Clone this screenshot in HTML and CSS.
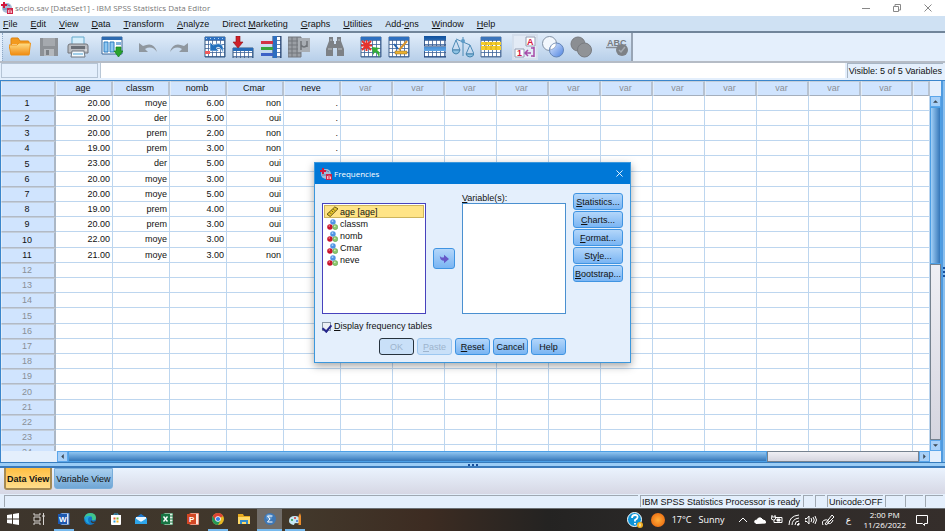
FILE: index.html
```
<!DOCTYPE html>
<html lang="en">
<head>
    <meta charset="UTF-8">
    <meta name="viewport" content="width=device-width, initial-scale=1.0">
    <title>socio.sav [DataSet1] - IBM SPSS Statistics Data Editor</title>
    <link rel="stylesheet" href="styles.css">
</head>
<body>
    <svg class="defs" aria-hidden="true">
        <defs>
            <linearGradient id="gFolder" x1="0" y1="0" x2="0" y2="1"><stop offset="0" stop-color="#ffe08a"/><stop offset="1" stop-color="#f08a10"/></linearGradient>
            <linearGradient id="gBlue" x1="0" y1="0" x2="0" y2="1"><stop offset="0" stop-color="#0f4f9c"/><stop offset="1" stop-color="#5ea6e8"/></linearGradient>
            <linearGradient id="gSet" x1="0" y1="0" x2="1" y2="1"><stop offset="0" stop-color="#dce9ff"/><stop offset="1" stop-color="#4d82e0"/></linearGradient>
            <radialGradient id="gSun"><stop offset="0" stop-color="#ffae3a"/><stop offset="1" stop-color="#ee7416"/></radialGradient>
            <pattern id="pGrid" width="4" height="4" patternUnits="userSpaceOnUse"><rect width="4" height="4" fill="#fff"/><path d="M0 .5H4M.5 0V4" stroke="#3c6298" stroke-width=".8"/></pattern>
        </defs>
        <symbol id="logo" viewBox="0 0 12 12">
            <circle cx="6" cy="6" r="5" fill="#a9bdd6"/><path d="M3 4q3-3 6 0M2 7h8" stroke="#5a80ac" fill="none"/>
            <path d="M3 0v6M0 3h6" stroke="#d3183c" stroke-width="2"/><rect x="6" y="6" width="6" height="6" fill="#cf2448"/><path d="M7.500 8v3M9 7.500v3.500M10.500 8.500v2.500" stroke="#fff" stroke-width=".7"/>
        </symbol>
        <symbol id="nominal" viewBox="0 0 12 12">
            <circle cx="6.500" cy="3.200" r="3" fill="#4f94e4"/><circle cx="3.200" cy="8.600" r="3" fill="#c9142c"/><circle cx="9" cy="8.800" r="2.800" fill="#8cc96e" stroke="#4f9440" stroke-width=".5"/>
            <circle cx="6" cy="2.300" r="1" fill="#b5d5fa"/><circle cx="2.500" cy="7.600" r=".9" fill="#f08c96"/><circle cx="8.500" cy="8" r=".9" fill="#d8f2c8"/>
        </symbol>
    </svg>

    <header class="titlebar">
        <svg class="logo"><use href="#logo"/></svg>
        <span>socio.sav [DataSet1] - IBM SPSS Statistics Data Editor</span>
        <div class="window-buttons">
            <button aria-label="Minimize"><svg viewBox="0 0 8 8"><path d="M0 4.500h8"/></svg></button>
            <button aria-label="Restore"><svg viewBox="0 0 8 8"><path d="M.5 2.500h5v5h-5zM2 2V.5h5.500V6H6"/></svg></button>
            <button aria-label="Close"><svg viewBox="0 0 8 8"><path d="M.5.5l7 7M7.500.5l-7 7"/></svg></button>
        </div>
    </header>

    <nav class="menu">
        <a href="#"><u>F</u>ile</a>
        <a href="#"><u>E</u>dit</a>
        <a href="#"><u>V</u>iew</a>
        <a href="#"><u>D</u>ata</a>
        <a href="#"><u>T</u>ransform</a>
        <a href="#"><u>A</u>nalyze</a>
        <a href="#">Direct <u>M</u>arketing</a>
        <a href="#"><u>G</u>raphs</a>
        <a href="#"><u>U</u>tilities</a>
        <a href="#">Add-<u>o</u>ns</a>
        <a href="#"><u>W</u>indow</a>
        <a href="#"><u>H</u>elp</a>
    </nav>

    <div class="toolbar-row">
        <div class="toolbar">
            <div class="tools files">
                <button aria-label="Open"><svg viewBox="0 0 22 22"><path d="M2 18V3q0-1 1-1h6l2 3h8q1 0 1 1v12z" fill="#f39a1e" stroke="#dc8210"/><path d="M3 8h15v9H3z" fill="#fff6dc"/><path d="M0 9h8l2-2h11.500L20 19H2z" fill="url(#gFolder)" stroke="#ee9218"/></svg></button>
                <button aria-label="Save"><svg viewBox="0 0 22 22"><path d="M2 2h18v18H2z" fill="#8d9196"/><path d="M5 2h12v8H5z" fill="#a5a9ae"/><path d="M6 13h10v7H6z" fill="#b4b8bd"/><path d="M8 14h3v5H8z" fill="#7c8085"/></svg></button>
                <button aria-label="Print"><svg viewBox="0 0 22 22"><path d="M5 1h12v9H5z" fill="#d5eefb" stroke="#65a9cb"/><path d="M1 10q0-2 2-2h16q2 0 2 2v7H1z" fill="#b9bcc1" stroke="#72757a"/><path d="M4 10h14v3H4z" fill="#6a6f76"/><path d="M5 15h12l1 6H4z" fill="#f4faff" stroke="#717982"/><path d="M6 18h10" stroke="#4aa1d2"/><path d="M18 14h2" stroke="#f4f4f4"/></svg></button>
            </div>
            <div class="tools">
                <button aria-label="Recall dialog"><svg viewBox="0 0 22 22"><path d="M1 1h20v17H1z" fill="#fff" stroke="#3c6697"/><path d="M1 1h20v3H1z" fill="#2e6bb0"/><path d="M3 6h4v10H3zM9 6h4v10H9z" fill="#8fc8f2" stroke="#2e7cc0"/><path d="M15 6h5v3h-5z" fill="#7fb0dc"/><path d="M15 11h5v4h2l-4.500 6L13 15h2z" fill="#2aa32c" stroke="#13801c" stroke-width=".7"/></svg></button>
            </div>
            <div class="tools arrows wide">
                <button aria-label="Undo"><svg viewBox="0 0 22 22"><path d="M2 7v9h9l-3-3q7-4 12 3Q17 5 6 10z" fill="#8f979f"/></svg></button>
                <button aria-label="Redo"><svg viewBox="0 0 22 22"><path d="M20 7v9h-9l3-3q-7-4-12 3Q5 5 16 10z" fill="#8f979f"/></svg></button>
            </div>
            <div class="tools wide">
                <button aria-label="Go to case"><svg viewBox="0 0 22 22"><path d="M1 1h20v20H1z" fill="url(#pGrid)" stroke="#315780"/><path d="M1 1h20v3H1z" fill="#2e70c0"/><path d="M2 2.500h19" stroke="#b5d7f5" stroke-dasharray="1 3"/><path d="M6 6v9h9l-3-3q4-3 7 5Q21 4 9 9z" fill="#2370bd" stroke="#fff" stroke-width=".5"/><path d="M1 15h5v3H1z" fill="#ee5b5b"/></svg></button>
                <button aria-label="Go to variable"><svg viewBox="0 0 22 22"><path d="M1 12h20v10H1z" fill="url(#pGrid)" stroke="#315780"/><path d="M1 12h20v3H1z" fill="#286cb8"/><path d="M4 0h4v6h3l-5 6-5-6h3z" fill="#cf2029" stroke="#8d1015" stroke-width=".6"/></svg></button>
                <button aria-label="Variables"><svg viewBox="0 0 22 22"><path d="M13 0h8v22h-8z" fill="url(#pGrid)" stroke="#243f69"/><path d="M13 0h4v22h-4z" fill="#2d6fc0"/><path d="M1 6.500h12" stroke="#d23345" stroke-width="3"/><path d="M1 12.500h12" stroke="#39a63c" stroke-width="3"/><path d="M1 18.500h12" stroke="#3d62c6" stroke-width="3"/></svg></button>
                <button aria-label="Descriptives"><svg viewBox="0 0 22 22"><path d="M0 1h13v20H0z" fill="#9a9ea4" stroke="#747980"/><path d="M0 5h13M0 9h13M0 13h13M0 17h13M4 1v20M9 1v20" stroke="#73777d"/><path d="M10 2h12v14H10z" fill="#a8adb3"/><path d="M13 14V5v4q3 4 6 0V5v6" fill="none" stroke="#6f7378" stroke-width="1.500"/></svg></button>
            </div>
            <div class="tools wide">
                <button aria-label="Find"><svg viewBox="0 0 22 22"><path d="M5 1h4v4h1v3h2V5h1V1h4v4l3 8v7h-7v-8h-4v8H2v-7l3-8z" fill="#7d8186"/><path d="M4 13h4M14 13h4M6 4h2M14 4h2" stroke="#bcc0c4"/></svg></button>
            </div>
            <div class="tools wide">
                <button aria-label="Insert cases"><svg viewBox="0 0 22 22"><path d="M1 1h20v20H1z" fill="url(#pGrid)" stroke="#44658e"/><path d="M1 1h20v3H1z" fill="#2e70c0"/><path d="M2 5l9 9M11 5l-9 9M6.500 4v11M1 9.500h11" stroke="#e8322b" stroke-width="2"/><path d="M19 22q2-6-2-8l3-2-8-1 1 8 2-3q3 1 4 6z" fill="#34ad35"/></svg></button>
                <button aria-label="Insert variable"><svg viewBox="0 0 22 22"><path d="M1 1h20v20H1z" fill="url(#pGrid)" stroke="#44658e"/><path d="M1 1h20v3H1z" fill="#2e70c0"/><path d="M6 8l4 5" fill="none" stroke="#2464ae" stroke-width="2"/><path d="M19 5l-8 9" stroke="#d8932b" stroke-width="2"/><path d="M7 15h12v3H7z" fill="#ecb12f" stroke="#8b6526" stroke-width=".5"/></svg></button>
            </div>
            <div class="tools wide">
                <button aria-label="Split file"><svg viewBox="0 0 22 22"><path d="M0 1h22v9H0zM0 12h22v9H0z" fill="url(#pGrid)" stroke="#1c437a"/><path d="M0 0h22v4H0zM0 11h22v4H0z" fill="url(#gBlue)"/></svg></button>
                <button aria-label="Weight cases"><svg viewBox="0 0 22 22"><g fill="none" stroke="#4f8cb7"><path d="M4 3l14 6M11 1v19M4 4L0 14h8L4 4M18 9l-4 9h8l-4-9"/></g><path d="M0 14h8q-1 4-4 4t-4-4M14 18h8q-1 3-4 3t-4-3" fill="#8ec3e4" stroke="#4482ac"/><circle cx="11" cy="5" r="2" fill="#5e9cc8"/></svg></button>
                <button aria-label="Select cases"><svg viewBox="0 0 22 22"><path d="M1 1h20v20H1z" fill="url(#pGrid)" stroke="#58769c"/><path d="M1 1h20v3H1z" fill="#3b75bb"/><path d="M1 6h20v3H1zM1 10h20v4H1z" fill="#f5ce2b"/><path d="M6 6v8M11 6v8M16 6v8" stroke="#d5a51c"/></svg></button>
            </div>
            <div class="tools">
                <button class="pressed" aria-label="Value labels"><svg viewBox="0 0 22 22"><path d="M12 1h9v9h-9z" fill="#fff" stroke="#929cb2"/><text x="13" y="9" class="glyph">A</text><path d="M1 13h9v8H1z" fill="#fff" stroke="#929cb2"/><text x="3" y="20" class="glyph">1</text><path d="M20 11v10M20 12h-3M20 20h-3M17 17h-5M14 14l-3 3 3 3" fill="none" stroke="#a64ba8" stroke-width="1.500"/></svg></button>
                <button aria-label="Use variable sets"><svg viewBox="0 0 22 22"><circle cx="7.500" cy="7.500" r="7" fill="#f2f7fd" stroke="#8291a4"/><circle cx="14.500" cy="14" r="7" fill="url(#gSet)" stroke="#6385b8"/><path d="M8 14q0-6 6-7 1 5-6 7" fill="#fff" stroke="#8195b4" stroke-width=".6"/></svg></button>
                <button aria-label="Show all variables"><svg viewBox="0 0 22 22"><circle cx="8" cy="8" r="7" fill="#8b8e92" stroke="#787b80"/><circle cx="14.500" cy="14" r="7" fill="#909397" stroke="#787b80"/></svg></button>
            </div>
            <div class="tools wide">
                <button aria-label="Spell check"><svg viewBox="0 0 22 22"><text x="1" y="10" class="abc">ABC</text><path d="M0 11.500h12" stroke="#888d94" stroke-width="1.500"/><circle cx="16" cy="14" r="6" fill="#7d8186"/><path d="M13 14l2 2 4-5" fill="none" stroke="#a6abb2" stroke-width="1.500"/></svg></button>
            </div>
        </div>
    </div>

    <div class="editbar">
        <output class="cell-name"></output>
        <input class="cell-value" type="text" aria-label="Cell value">
        <span class="visible">Visible: 5 of 5 Variables</span>
    </div>

    <main class="editor">
        <div class="sheet">
            <table>
                <colgroup id="cols"></colgroup>
                <thead><tr id="headings"></tr></thead>
                <tbody id="rows"></tbody>
            </table>
        </div>
        <div class="vscroll">
            <span class="corner"></span>
            <button aria-label="Scroll up"><svg viewBox="0 0 8 8"><path d="M0 6l4-4 4 4z"/></svg></button>
            <span class="thumb"></span>
            <span class="track"></span>
            <button aria-label="Scroll down"><svg viewBox="0 0 8 8"><path d="M0 2l4 4 4-4z"/></svg></button>
        </div>
        <div class="hscroll">
            <span class="corner"></span>
            <button aria-label="Scroll left"><svg viewBox="0 0 8 8"><path d="M6 0L2 4l4 4z"/></svg></button>
            <span class="thumb"></span>
            <span class="track"></span>
            <button aria-label="Scroll right"><svg viewBox="0 0 8 8"><path d="M2 0l4 4-4 4z"/></svg></button>
        </div>
        <div class="side-split"><i></i><i></i><i></i></div>
    </main>
    <div class="splitter"><i></i><i></i><i></i></div>

    <div class="views">
        <button class="view active">Data View</button>
        <button class="view">Variable View</button>
    </div>

    <footer class="status">
        <span class="message"></span>
        <span class="processor">IBM SPSS Statistics Processor is ready</span>
        <span class="small"></span>
        <span class="small"></span>
        <span class="unicode">Unicode:OFF</span>
        <span class="medium"></span>
        <span class="medium"></span>
        <span class="medium"></span>
    </footer>

    <div class="taskbar">
        <div class="apps">
            <button aria-label="Start"><svg viewBox="0 0 12 12"><path d="M0 2l5-.7v4.300H0zM6 1.100L12 0v5.600H6zM0 6.400h5v4.400L0 10zM6 6.400h6V12l-6-.9z" fill="#fff"/></svg></button>
            <button aria-label="Task view"><svg viewBox="0 0 12 12"><path d="M1 0v2h6V0M1 12v-2h6v2M1 4h6v4H1zM10.500 0v12M9 3h3" fill="none" stroke="#d8d5d2"/></svg></button>
            <button class="open" aria-label="Word"><svg viewBox="0 0 12 12"><path d="M3 0h8v12H3z" fill="#d7e5f8" stroke="#2c62b5"/><path d="M0 1h9v10H0z" fill="#1d58b0"/><text x="1" y="9">W</text></svg></button>
            <button aria-label="Edge"><svg viewBox="0 0 12 12"><circle cx="6" cy="6" r="6" fill="#1478c6"/><path d="M0 6Q1 0 6 0q6 0 6 5 0 3-4 2 1-4-3-4-3 0-5 3" fill="#41c68c"/><path d="M1 5q3-4 7-1-4-1-4 3 0 2 2 4-5-1-5-6" fill="#20a7df"/><path d="M7 7q1 3 5 1-1 3-4 2-2-1-1-3" fill="#3c352d"/></svg></button>
            <button aria-label="Store"><svg viewBox="0 0 12 12"><path d="M4 3V1h4v2" fill="none" stroke="#3aa8e0"/><path d="M1 2h10v9q0 1-1 1H2q-1 0-1-1z" fill="#fff"/><path d="M3.500 4.500h2v2h-2z" fill="#ed5426"/><path d="M6.500 4.500h2v2h-2z" fill="#75b72a"/><path d="M3.500 7.500h2v2h-2z" fill="#2c9cdf"/><path d="M6.500 7.500h2v2h-2z" fill="#f5b71b"/></svg></button>
            <button aria-label="Mail"><svg viewBox="0 0 12 12"><path d="M0 5l6-4 6 4v6H0z" fill="#1c78cf"/><path d="M1 4h10v3L6 9 1 7z" fill="#eaf7ff"/><path d="M0 5l6 4 6-4v6H0z" fill="#2ea5ea"/></svg></button>
            <button aria-label="Excel"><svg viewBox="0 0 12 12"><path d="M3 0h9v12H3z" fill="#e0f1e5" stroke="#237747"/><path d="M9 3h3M9 6h3M9 9h3" stroke="#237747"/><path d="M0 1h9v10H0z" fill="#177443"/><path d="M2.500 3.500l4 5M6.500 3.500l-4 5" stroke="#fff" stroke-width="1.400"/></svg></button>
            <button aria-label="PowerPoint"><svg viewBox="0 0 12 12"><path d="M3 0h9v12H3z" fill="#ffe8df" stroke="#cf4726"/><path d="M0 1h9v10H0z" fill="#d34724"/><text x="2" y="9">P</text></svg></button>
            <button class="open" aria-label="Chrome"><svg viewBox="0 0 12 12"><circle cx="6" cy="6" r="6" fill="#e7b824"/><path d="M.8 3A6 6 0 0 1 11.200 3L6 6z" fill="#db4435"/><path d="M.8 3A6 6 0 0 0 6 12l2.500-4.500H6z" fill="#249858"/><path d="M.8 3l2.500 4.500L6 6V3h5" fill="#db4435"/><circle cx="6" cy="6" r="2.800" fill="#fff"/><circle cx="6" cy="6" r="2.100" fill="#397fe5"/></svg></button>
            <button aria-label="File Explorer"><svg viewBox="0 0 12 12"><path d="M0 1h5l1 2h6v8H0z" fill="#e6a91f"/><path d="M0 4h12v7H0z" fill="#ffda68"/><path d="M2 7h8v4H8V9H4v2H2z" fill="#348ccb"/></svg></button>
            <button class="current" aria-label="SPSS"><svg viewBox="0 0 12 12"><circle cx="6" cy="6" r="6" fill="#3e77b5"/><circle cx="5" cy="4" r="3" fill="#5d95cd"/><path d="M8.500 3h-5L6 6 3.500 9h5" fill="none" stroke="#fff"/></svg></button>
            <button class="open" aria-label="Paint"><svg viewBox="0 0 12 12"><path d="M0 8Q0 3 6 3q5 0 5 5 0 3-4 2-2 0-2 2-5-1-5-4" fill="#c5e8f5"/><circle cx="3" cy="7" r="1" fill="#2e9a4b"/><circle cx="6" cy="5" r="1" fill="#d83630"/><circle cx="8" cy="8" r="1" fill="#386fd3"/><path d="M9.500 12V3l1.500-3 1 3v9z" fill="#ec8d2b"/></svg></button>
        </div>
        <div class="tray">
            <button class="big" aria-label="Help"><svg viewBox="0 0 16 16"><circle cx="7.500" cy="7.500" r="7" fill="#0b93d8" stroke="#fff"/><path d="M5 6q0-3 3-3 3 0 2.500 2.500Q10 7 8 8v1.500M8 11v1.500" fill="none" stroke="#fff" stroke-width="1.800"/><circle cx="13" cy="13" r="3" fill="#f0ae20"/><path d="M13 11.500v3" stroke="#fff"/></svg></button>
            <button class="weather"><svg viewBox="0 0 14 14"><circle cx="7" cy="7" r="7" fill="url(#gSun)"/></svg><span>17°C</span><span>Sunny</span></button>
            <div class="tray-icons">
                <button aria-label="Show hidden icons"><svg viewBox="0 0 12 12"><path d="M2 8l4-4 4 4"/></svg></button>
                <button aria-label="OneDrive"><svg viewBox="0 0 12 12"><path d="M2 9.500q-2-1-1-3l2-.5q1-3 4-2l2 2q3 0 2.500 3z" fill="#fff"/></svg></button>
                <button aria-label="Battery"><svg viewBox="0 0 12 12"><path d="M4 3.500h7v5H3V6M1 1v2M4 1v2M0 3h5q0 3-2.500 3Q0 6 0 3"/><path d="M6 5h3v2H6z" fill="#fff"/></svg></button>
                <button aria-label="Network"><svg viewBox="0 0 12 12"><path d="M1 11Q1 2 11 1M4 11q0-6 7-7M7 11q0-4 4-4"/><path d="M9 11h2V9z" fill="#fff"/></svg></button>
                <button aria-label="Volume"><svg viewBox="0 0 12 12"><path d="M0 4.500h2L4 2v8L2 7.500H0zM6 4q1.500 2 0 4M8 3q2.500 3 0 6M10 2q3 4 0 8"/></svg></button>
                <button aria-label="Pen"><svg viewBox="0 0 12 12"><path d="M1 11Q-1 7 3 6t3 3q-1 3-3 1l7-9 2 2-6 6q3 2 5-3"/></svg></button>
            </div>
            <button class="lang">ع</button>
            <button class="clock"><time>2:00 PM</time><time>11/26/2022</time></button>
            <button class="notify" aria-label="Notifications"><svg viewBox="0 0 12 12"><path d="M.5 1.500h11v8h-3v2l-2-2h-6z"/></svg></button>
        </div>
    </div>

    <section class="dialog" role="dialog" aria-labelledby="dialogTitle">
        <header>
            <svg class="logo"><use href="#logo"/></svg>
            <h1 id="dialogTitle">Frequencies</h1>
            <button aria-label="Close dialog"><svg viewBox="0 0 8 8"><path d="M.5.5l7 7M7.500.5l-7 7"/></svg></button>
        </header>
        <div class="fields">
            <ul class="list source">
                <li class="selected"><svg viewBox="0 0 12 12"><path d="M0 9l8.500-8L12 3 3.500 11.500z" fill="#e5c42b" stroke="#5c4c11"/><path d="M3 7l1.500 1.500M5 5l1.500 1.500M7 3.500L8.500 5" stroke="#5c4c11"/></svg>age [age]</li>
                <li><svg><use href="#nominal"/></svg>classm</li>
                <li><svg><use href="#nominal"/></svg>nomb</li>
                <li><svg><use href="#nominal"/></svg>Cmar</li>
                <li><svg><use href="#nominal"/></svg>neve</li>
            </ul>
            <button class="move" aria-label="Move to variables"><svg viewBox="0 0 12 12"><path d="M1 2q1 3 5 2V1l6 5-6 5V8Q1 8 1 2" fill="#6658c8"/></svg></button>
            <div class="target">
                <span id="targetLabel"><u>V</u>ariable(s):</span>
                <ul class="list" aria-labelledby="targetLabel"></ul>
            </div>
            <div class="options">
                <button><u>S</u>tatistics...</button>
                <button><u>C</u>harts...</button>
                <button><u>F</u>ormat...</button>
                <button>Sty<u>l</u>e...</button>
                <button><u>B</u>ootstrap...</button>
            </div>
        </div>
        <label class="check" for="tables"><input type="checkbox" id="tables" checked><span><u>D</u>isplay frequency tables</span></label>
        <div class="actions">
            <button class="default" disabled>OK</button>
            <button disabled><u>P</u>aste</button>
            <button><u>R</u>eset</button>
            <button>Cancel</button>
            <button>Help</button>
        </div>
    </section>

    <script>
        const names = ['age', 'classm', 'nomb', 'Cmar', 'neve'];
        const data = [
            ['20.00', 'moye', '6.00', 'non', '.'],
            ['20.00', 'der', '5.00', 'oui', '.'],
            ['20.00', 'prem', '2.00', 'non', '.'],
            ['19.00', 'prem', '3.00', 'non', '.'],
            ['23.00', 'der', '5.00', 'oui', '.'],
            ['20.00', 'moye', '3.00', 'oui', '.'],
            ['20.00', 'moye', '5.00', 'oui', '.'],
            ['19.00', 'prem', '4.00', 'oui', '.'],
            ['20.00', 'prem', '3.00', 'oui', '.'],
            ['22.00', 'moye', '3.00', 'oui', '.'],
            ['21.00', 'moye', '3.00', 'non', '.']
        ];
        const emptyColumns = 12;
        const totalRows = 24;

        // Column widths and headings
        let cols = '<col class="number">';
        let headings = '<th></th>';
        for (let c = 0; c < names.length; c++) {
            cols += '<col class="used">';
            headings += '<th>' + names[c] + '</th>';
        }
        for (let c = 0; c < emptyColumns; c++) {
            const last = c === emptyColumns - 1;
            cols += last ? '<col>' : '<col class="unused">';
            headings += '<th class="empty">' + (last ? '' : 'var') + '</th>';
        }
        document.getElementById('cols').innerHTML = cols;
        document.getElementById('headings').innerHTML = headings;

        // Cases
        let rows = '';
        for (let r = 0; r < totalRows; r++) {
            const values = data[r] || [];
            rows += '<tr><th' + (data[r] ? '' : ' class="empty"') + '>' + (r + 1) + '</th>';
            for (let c = 0; c < names.length + emptyColumns; c++) {
                rows += '<td>' + (values[c] || '') + '</td>';
            }
            rows += '</tr>';
        }
        document.getElementById('rows').innerHTML = rows;
    </script>
</body>
</html>
```
FILE: styles.css
```
* {
    box-sizing: border-box;
}
body {
    margin: 0;
    height: 100vh;
    display: flex;
    flex-direction: column;
    overflow: hidden;
    position: relative;
    font-family: "Liberation Sans", Arial, sans-serif;
    font-size: 9px;
    line-height: 12px;
    color: #111;
    background: #e4effc;
}
button {
    font: inherit;
    color: inherit;
    padding: 0;
    border: none;
    background: none;
    white-space: nowrap;
}
svg {
    display: block;
    flex: none;
}
.defs {
    position: absolute;
    width: 0;
    height: 0;
}
.logo {
    width: 12px;
    height: 12px;
}

/* Title bar and menu */
.titlebar {
    flex: none;
    height: 16px;
    display: flex;
    align-items: center;
    gap: 2px;
    padding: 0 13px 0 1px;
    background: #fff;
    color: #777;
    font-family: "Open Sans", "Noto Sans", sans-serif;
    font-size: 8px;
}
.window-buttons {
    display: flex;
    gap: 23px;
    margin-left: auto;
}
.window-buttons svg {
    width: 8px;
    height: 8px;
    fill: none;
    stroke: #888;
}
.menu {
    flex: none;
    height: 17px;
    display: flex;
    align-items: center;
    gap: 13px;
    padding: 0 3px;
    background: #cfe1f3;
    border-bottom: 2px solid #71859a;
}
.menu a {
    color: #111;
    text-decoration: none;
    white-space: nowrap;
}

/* Toolbar */
.toolbar-row {
    flex: none;
    height: 30px;
    display: flex;
    border-bottom: 2px solid #b5bcc6;
}
.toolbar {
    display: flex;
    align-items: center;
    gap: 12px;
    padding: 0 3px 0 6px;
    margin-left: 2px;
    border-left: 1px dotted #8fa9c6;
    border-right: 2px solid #98a5b5;
    background: linear-gradient(#e1edfa, #b7cfe9);
}
.tools {
    display: flex;
    gap: 6px;
}
.files {
    gap: 7px;
}
.arrows {
    gap: 9px;
}
.wide {
    margin-left: 2px;
}
.tools svg {
    width: 22px;
    height: 22px;
}
.tools .pressed {
    background: #e3ebf6;
    outline: 2px solid #d4dfed;
}
.glyph {
    font-size: 9px;
    font-weight: bold;
    fill: #d51745;
}
.abc {
    font-size: 9px;
    font-weight: bold;
    fill: #777c82;
}

/* Cell editor line */
.editbar {
    flex: none;
    height: 17px;
    display: flex;
    padding: 0 2px 2px 1px;
    gap: 2px;
}
.cell-name {
    width: 97px;
    border: 1px solid #b5c4d5;
}
.cell-value {
    flex: 1;
    min-width: 0;
    border: 1px solid #b9c7d6;
    border-width: 0 0 0 1px;
    background: #fff;
    font: inherit;
}
.visible {
    padding: 1px 1px 0;
    border: 2px solid #a7b5c4;
    border-width: 1px 0 0 1px;
    white-space: nowrap;
}

/* Data sheet */
.editor {
    flex: 1;
    min-height: 0;
    display: grid;
    grid-template-columns: minmax(0, 1fr) 11px 4px;
    grid-template-rows: minmax(0, 1fr) 11px;
    border: 1px solid #3b86cc;
    border-right: none;
    border-bottom: none;
}
.sheet {
    overflow: hidden;
    background: #fff;
}
table {
    width: 100%;
    table-layout: fixed;
    border-collapse: separate;
    border-spacing: 0;
}
.number {
    width: 55px;
}
.used {
    width: 57px;
}
.unused {
    width: 52px;
}
th,
td {
    height: 15px;
    padding: 0 2px 0 0;
    overflow: hidden;
    line-height: 13px;
    font-weight: normal;
}
tbody tr:nth-child(5n) th,
tbody tr:nth-child(5n) td {
    height: 16px;
}
td {
    text-align: right;
    border-right: 1px solid #bdd6ef;
    border-bottom: 1px solid #bdd6ef;
}
th {
    text-align: center;
    background: #d0e4fe;
    border: 1px solid #b2bac6;
    border-left-color: #e3edf8;
    border-top-color: #c3cedb;
}
thead th {
    border-right: 2px solid #b7c2d0;
    border-bottom-color: #a4afbd;
}
tbody th {
    border-right: 2px solid #abb7c5;
}
th.empty {
    color: #8a8f96;
}

/* Scroll bars */
.vscroll {
    display: flex;
    flex-direction: column;
    background: #e4effc;
}
.hscroll {
    grid-column: 1 / 3;
    display: flex;
    background: #e4effc;
}
.vscroll .corner {
    height: 15px;
}
.hscroll .corner {
    width: 56px;
}
.hscroll::after {
    content: "";
    width: 11px;
}
.vscroll button,
.hscroll button {
    flex: none;
    width: 11px;
    height: 11px;
    display: grid;
    place-items: center;
    border: 1px solid #5ba6ea;
    background: #a8d0f8;
}
.vscroll button svg,
.hscroll button svg {
    width: 5px;
    height: 5px;
    fill: #3b4652;
}
.thumb {
    border: 1px solid #4c9fe5;
}
.vscroll .thumb {
    flex: 47;
    background: linear-gradient(to right, #a2d0f7, #3476b8);
}
.hscroll .thumb {
    flex: 702;
    background: linear-gradient(#8fc5f2, #3476b8);
}
.track {
    border: 1px solid #76828f;
    background: linear-gradient(#efeff4, #d5d5df);
}
.vscroll .track {
    flex: 53;
}
.hscroll .track {
    flex: 151;
}
.side-split {
    grid-column: 3;
    grid-row: 1 / 3;
    display: flex;
    flex-direction: column;
    justify-content: center;
    gap: 2px;
    border-left: 2px solid #4f9be0;
    background: #8abfee;
}
.splitter {
    flex: none;
    height: 6px;
    display: flex;
    align-items: center;
    justify-content: center;
    gap: 2px;
    background: #9bcdf6;
    border-top: 1px solid #367cbd;
    border-bottom: 2px solid #3a7abb;
}
.splitter i,
.side-split i {
    width: 2px;
    height: 2px;
    background: #174f9c;
}

/* View tabs and status */
.views {
    flex: none;
    height: 26px;
    display: flex;
    align-items: flex-start;
    gap: 2px;
    padding-left: 4px;
    background: linear-gradient(#eaf3fe, #d6d7e4);
}
.view {
    height: 21px;
    padding: 0 1px;
    border: 1px solid #79aedb;
    border-radius: 0 0 3px 3px;
    background: linear-gradient(#a9d0f0, #70a6d5);
}
.view.active {
    height: 22px;
    padding-top: 2px;
    border: 2px solid #a58a54;
    border-top: none;
    background: linear-gradient(#ffbf42, #ffdd8c);
    font-weight: bold;
}
.status {
    flex: none;
    height: 15px;
    display: flex;
    gap: 2px;
    padding: 1px 2px 1px 4px;
    border-bottom: 1px solid #6b7074;
}
.status span {
    padding: 0 1px;
    border: 1px solid #9fa8b2;
    border-width: 1px 0 0 1px;
    white-space: nowrap;
}
.status .message {
    flex: 1;
}
.status .small {
    width: 10px;
}
.status .medium {
    width: 18px;
}
.status .unicode {
    width: 56px;
}

/* Taskbar */
.taskbar {
    flex: none;
    height: 22px;
    display: flex;
    justify-content: space-between;
    background: linear-gradient(to right, #3d352c, #42382b 32%, #3d2c22 45%, #242322 58%, #2b2928 70%, #352e2b);
    color: #fff;
    font-family: "Open Sans", "Noto Sans", sans-serif;
}
.apps {
    width: 308px;
    display: flex;
}
.apps button {
    flex: 1;
    display: grid;
    place-items: center;
    border-bottom: 2px solid transparent;
}
.apps svg {
    width: 12px;
    height: 12px;
}
.apps text {
    font: bold 8px "Liberation Sans", sans-serif;
    fill: #fff;
}
.apps .open {
    background: linear-gradient(#76b9ed, #76b9ed) center bottom / 20px 2px no-repeat border-box;
}
.apps .current {
    background: #716d69;
    border-bottom-color: #76b9ed;
}
.tray {
    display: flex;
    align-items: center;
    gap: 8px;
    padding-right: 17px;
}
.big svg {
    width: 16px;
    height: 16px;
}
.weather {
    display: flex;
    align-items: center;
    gap: 7px;
    margin-right: 4px;
    font-size: 9px;
}
.weather svg {
    width: 14px;
    height: 14px;
}
.tray-icons {
    display: flex;
    gap: 5px;
}
.tray-icons svg,
.notify svg {
    width: 12px;
    height: 12px;
    fill: none;
    stroke: #fff;
}
.lang {
    width: 14px;
    font-family: "DejaVu Sans", sans-serif;
}
.clock {
    display: flex;
    flex-direction: column;
    align-items: center;
    font-size: 8px;
    line-height: 10px;
}
.notify {
    margin-left: 2px;
}

/* Frequencies dialog */
.dialog {
    position: absolute;
    left: 314px;
    top: 162px;
    width: 317px;
    border: 1px solid #3b97dc;
    background: #e4effc;
    box-shadow: 0 3px 8px rgba(0, 0, 0, 0.35);
}
.dialog header {
    height: 21px;
    display: flex;
    align-items: center;
    gap: 2px;
    padding: 0 7px 0 5px;
    background: #0078d7;
    color: #fff;
}
.dialog h1 {
    margin: 0;
    font: 8px "Open Sans", "Noto Sans", sans-serif;
}
.dialog header button {
    margin-left: auto;
}
.dialog header button svg {
    width: 7px;
    height: 7px;
    stroke: #fff;
}
.fields {
    display: flex;
    align-items: flex-end;
    gap: 7px;
    padding: 9px 7px 0;
}
.list {
    width: 104px;
    height: 111px;
    margin: 0;
    padding: 1px;
    border: 1px solid #4a90d0;
    background: #fff;
    list-style: none;
}
.source {
    border-color: #4742bd;
}
.list li {
    display: flex;
    align-items: center;
    gap: 2px;
    height: 12px;
    padding-left: 3px;
}
.list .selected {
    height: 13px;
    background: #ffe487;
    border: 1px solid #cdb45c;
    padding-left: 2px;
}
.list svg {
    width: 11px;
    height: 11px;
}
.fields button,
.actions button {
    height: 17px;
    border: 1px solid #3f94e2;
    border-radius: 3px;
    background: linear-gradient(#b3d6fa, #7ab5f3);
}
.fields .move {
    width: 22px;
    height: 21px;
    margin-bottom: 45px;
    display: grid;
    place-items: center;
}
.move svg {
    width: 10px;
    height: 10px;
}
.target span {
    display: block;
    height: 10px;
    line-height: 10px;
}
.options {
    flex: 1;
    align-self: flex-start;
    display: flex;
    flex-direction: column;
    gap: 1px;
}
.check {
    display: flex;
    align-items: center;
    gap: 3px;
    margin: 6px 7px;
}
.check input {
    appearance: none;
    display: grid;
    place-items: center;
    width: 9px;
    height: 9px;
    margin: 0;
    border: 1px solid #8794a4;
    background: #eceff5;
}
.check input:checked::after {
    content: "";
    width: 4px;
    height: 7px;
    border: solid #26268c;
    border-width: 0 2px 2px 0;
    transform: rotate(40deg);
}
.actions {
    display: flex;
    justify-content: center;
    gap: 3px;
    padding-bottom: 7px;
}
.actions button {
    width: 35px;
}
.actions button:disabled {
    color: #9db4cd;
    border-color: #9cc7f0;
    background: #c9e0f8;
}
.actions .default:disabled {
    border-color: #26323d;
}
```
